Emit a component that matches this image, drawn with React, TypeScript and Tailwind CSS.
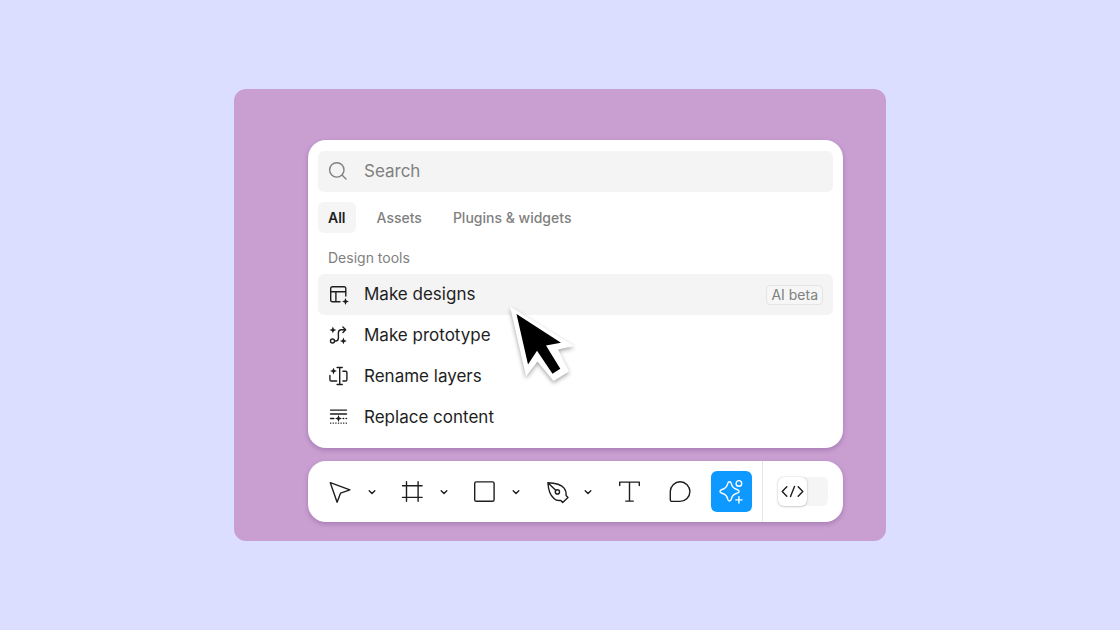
import { useState } from "react";
import type { ReactNode } from "react";

type Tool = {
  name: string;
  icon: ReactNode;
};

const tabs = ["All", "Assets", "Plugins & widgets"];

// small four-point sparkle used by the AI actions
const Spark = ({ x, y }: { x: number; y: number }) => (
  <path
    transform={`translate(${x} ${y})`}
    d="M0-3.4 1-1 3.4 0 1 1 0 3.4-1 1-3.4 0-1-1Z"
    fill="currentColor"
    stroke="none"
  />
);

const MenuIcon = ({ children }: { children: ReactNode }) => (
  <svg
    viewBox="0.5 0.5 22 22"
    className="size-[22px] shrink-0 overflow-visible"
    fill="none"
    stroke="currentColor"
    strokeWidth="1.4"
    strokeLinecap="round"
    strokeLinejoin="round"
    aria-hidden="true"
  >
    {children}
  </svg>
);

const ToolIcon = ({ children }: { children: ReactNode }) => (
  <svg
    viewBox="0.5 0.5 24 24"
    className="size-6 shrink-0 overflow-visible"
    fill="none"
    stroke="currentColor"
    strokeWidth="1.4"
    strokeLinecap="round"
    strokeLinejoin="round"
    aria-hidden="true"
  >
    {children}
  </svg>
);

const actions: Tool[] = [
  {
    name: "Make designs",
    icon: (
      <MenuIcon>
        <path d="M12.5 18.3H4.8a1.6 1.6 0 0 1-1.6-1.6V4.9a1.6 1.6 0 0 1 1.6-1.6h11.9a1.6 1.6 0 0 1 1.6 1.6v7.6M3.2 8.2h15.1M8.4 8.2v10.1" />
        <Spark x={18} y={18} />
      </MenuIcon>
    ),
  },
  {
    name: "Make prototype",
    icon: (
      <MenuIcon>
        <Spark x={5.4} y={5.4} />
        <Spark x={15.9} y={16.4} />
        <circle cx="5" cy="16.5" r="2" />
        <path d="M7.2 16.5h.9c2 0 2.8-1.2 2.8-3V8.3c0-2 1-3 3-3h4M15.4 2.6l2.8 2.7-2.8 2.7" />
      </MenuIcon>
    ),
  },
  {
    name: "Rename layers",
    icon: (
      <MenuIcon>
        <Spark x={6} y={5.6} />
        <path d="M9.6 2h5.2M12.2 2v17M9.6 19h5.2M2.4 10v4.2c0 .8.5 1.3 1.3 1.3h5.4M15.4 5.8h2.7c.8 0 1.3.5 1.3 1.3v7.1c0 .8-.5 1.3-1.3 1.3h-2.7" />
      </MenuIcon>
    ),
  },
  {
    name: "Replace content",
    icon: (
      <MenuIcon>
        <path d="M3 3.6h16M3 7.5h16M3 12h3.4M15.6 12h.6M18.6 12h.4" />
        <path d="M3 16.6h16" strokeWidth="1.2" strokeDasharray=".4 2.2" />
        <Spark x={11} y={12} />
      </MenuIcon>
    ),
  },
];

const menuTools: Tool[] = [
  {
    name: "Move",
    icon: (
      <ToolIcon>
        <path d="M1.8 3.2 21.4 10.3 12.1 13.6 8.6 22.7Z" />
      </ToolIcon>
    ),
  },
  {
    name: "Frame",
    icon: (
      <ToolIcon>
        <path d="M6 2.2v19.6M17.6 2.2v19.6M2 6.3h19.6M2 17.9h19.6" />
      </ToolIcon>
    ),
  },
  {
    name: "Rectangle",
    icon: (
      <ToolIcon>
        <rect x="2.2" y="2.4" width="19.4" height="19.4" rx="1.6" />
      </ToolIcon>
    ),
  },
  {
    name: "Pen",
    icon: (
      <ToolIcon>
        <path d="M3.4 3.2 11.5 11M3.4 3.2C10 3.4 16.6 5 19.6 8.6c1.8 2.2 2.2 4.8 2 7.4l1.9 1.9-5.3 5-1.9-2c-2.6.4-4.9 0-6.9-2C5.6 15.7 3.8 9.7 3.4 3.2Z" />
        <circle cx="12.9" cy="12.4" r="2.1" />
      </ToolIcon>
    ),
  },
];

const plainTools: Tool[] = [
  {
    name: "Text",
    icon: (
      <ToolIcon>
        <path d="M2.2 6V2.6h19.6V6M12 2.6v19M8.2 21.6h7.6" />
      </ToolIcon>
    ),
  },
  {
    name: "Comment",
    icon: (
      <ToolIcon>
        <path d="M11.6 21.9H3.5a1.7 1.7 0 0 1-1.7-1.7v-8.1a9.8 9.8 0 1 1 9.8 9.8Z" />
      </ToolIcon>
    ),
  },
];

const Chevron = () => (
  <svg
    viewBox="0 0 8 8"
    className="size-2"
    fill="none"
    stroke="currentColor"
    strokeWidth="1.4"
    strokeLinecap="round"
    strokeLinejoin="round"
    aria-hidden="true"
  >
    <path d="M1.2 2.7 4 5.4l2.8-2.7" />
  </svg>
);

function ActionsPanel() {
  const [tab, setTab] = useState("All");
  const [query, setQuery] = useState("");

  return (
    <section className="relative rounded-[18px] bg-white px-2.5 pt-[11px] pb-2.5 shadow-[0_2px_5px_rgba(60,20,80,0.25)]">
      <label className="flex h-[41px] items-center gap-3.5 rounded-md bg-[#f4f4f4] px-2.5 text-[#808080]">
        <MenuIcon>
          <circle cx="9.3" cy="9.4" r="7.2" />
          <path d="m14.5 14.6 4 4" />
        </MenuIcon>
        <input
          type="text"
          aria-label="Search"
          placeholder="Search"
          value={query}
          onChange={(e) => setQuery(e.target.value)}
          className="min-w-0 flex-1 bg-transparent text-[17px] text-[#1e1e1e] outline-none placeholder:text-[#808080]"
        />
      </label>

      <div className="mt-2.5 flex gap-[11px]">
        {tabs.map((name) => (
          <button
            key={name}
            onClick={() => setTab(name)}
            className={`h-[31px] rounded-md px-2.5 text-sm ${
              tab === name
                ? "bg-[#f5f5f5] font-semibold text-[#1e1e1e]"
                : "font-medium text-[#808080]"
            }`}
          >
            {name}
          </button>
        ))}
      </div>

      <h2 className="flex h-[41px] items-center px-2.5 pt-2 text-sm text-[#808080]">
        Design tools
      </h2>
      <ul>
        {actions.map((action, idx) => (
          <li key={action.name}>
            <button
              className={`flex h-[41px] w-full items-center gap-3.5 rounded-md px-2.5 text-[17px] text-[#1e1e1e] ${
                idx === 0 ? "bg-[#f4f4f4]" : ""
              }`}
            >
              {action.icon}
              {action.name}
              {idx === 0 && (
                <span className="ml-auto rounded-sm border border-[#e4e4e4] bg-[#f6f6f6] px-1 text-sm leading-[18px] text-[#808080]">
                  AI beta
                </span>
              )}
            </button>
          </li>
        ))}
      </ul>

      {/* pointer over the highlighted row */}
      <svg
        viewBox="0 0 90 90"
        className="pointer-events-none absolute top-[160px] left-[192px] size-[90px] drop-shadow-[0_2px_2px_rgba(0,0,0,0.35)]"
        aria-hidden="true"
      >
        <path
          d="M10 6.5 74 46 58 49.5 69 71.5 53.5 81 37.5 61.5 26 76.5Z"
          fill="#fff"
        />
        <path
          d="M16.5 14 61 42.7 46 45.5 60.3 68.7 52.5 73.7 37 50.7 28 64.5Z"
          fill="#000"
        />
      </svg>
    </section>
  );
}

function Toolbar() {
  const toolButton = "flex size-[41px] items-center justify-center rounded-md";

  return (
    <nav className="flex h-[61px] rounded-[18px] bg-white pl-3 text-[#1e1e1e] shadow-[0_2px_5px_rgba(60,20,80,0.25)]">
      <div className="flex items-center gap-[11px]">
        <div className="flex items-center gap-2.5">
          {menuTools.map((tool) => (
            <div key={tool.name} className="flex">
              <button aria-label={tool.name} className={toolButton}>
                {tool.icon}
              </button>
              <button
                aria-label={`${tool.name} options`}
                className="flex w-[21px] items-center justify-center"
              >
                <Chevron />
              </button>
            </div>
          ))}
        </div>
        <div className="flex items-center gap-2.5">
          {plainTools.map((tool) => (
            <button key={tool.name} aria-label={tool.name} className={toolButton}>
              {tool.icon}
            </button>
          ))}
          <button
            aria-label="Actions"
            className={`${toolButton} bg-[#0d99ff] text-white`}
          >
            <ToolIcon>
              <path d="M10 2.3c1 0 1.5.7 1.8 1.9.8 3.5 2.200 4.900 5.600 5.800 1.200.3 2.200.9 2.200 1.900s-1 1.600-2.200 1.900c-3.400.9-4.800 2.400-5.600 5.800-.3 1.200-.8 1.900-1.800 1.900s-1.500-.7-1.800-1.900c-.8-3.400-2.200-4.900-5.600-5.800-1.200-.3-2.100-.9-2.100-1.900s.9-1.600 2.100-1.900c3.400-.9 4.800-2.300 5.600-5.800.3-1.200.8-1.900 1.800-1.900Z" />
              <circle cx="19.4" cy="3.9" r="2.8" />
              <path d="M19.4 17.3v6.2M16.3 20.4h6.2" />
            </ToolIcon>
          </button>
        </div>
      </div>

      <div className="ml-2.5 flex flex-1 items-center border-l border-[#e6e6e6] pl-[15px]">
        <button
          role="switch"
          aria-checked="false"
          aria-label="Dev mode"
          className="flex w-[50px] rounded-md bg-[#f5f5f5]"
        >
          <span className="flex size-[29px] items-center justify-center rounded-md bg-white shadow-[0_0_2px_rgba(0,0,0,0.2),0_1px_2px_rgba(0,0,0,0.15)]">
            <ToolIcon>
              <path d="M6.3 7.2 1.7 12l4.600 4.800M17.700 7.200l4.600 4.800-4.600 4.800M14 7l-4 10" />
            </ToolIcon>
          </span>
        </button>
      </div>
    </nav>
  );
}

export default function App() {
  return (
    <main className="flex min-h-screen items-center justify-center bg-[#dbdeff] font-['Inter',sans-serif]">
      <div className="flex w-full max-w-[652px] flex-col gap-[13px] rounded-xl bg-[#c99fd2] pt-[51px] pr-[43px] pb-[19px] pl-[74px]">
        <ActionsPanel />
        <Toolbar />
      </div>
    </main>
  );
}
